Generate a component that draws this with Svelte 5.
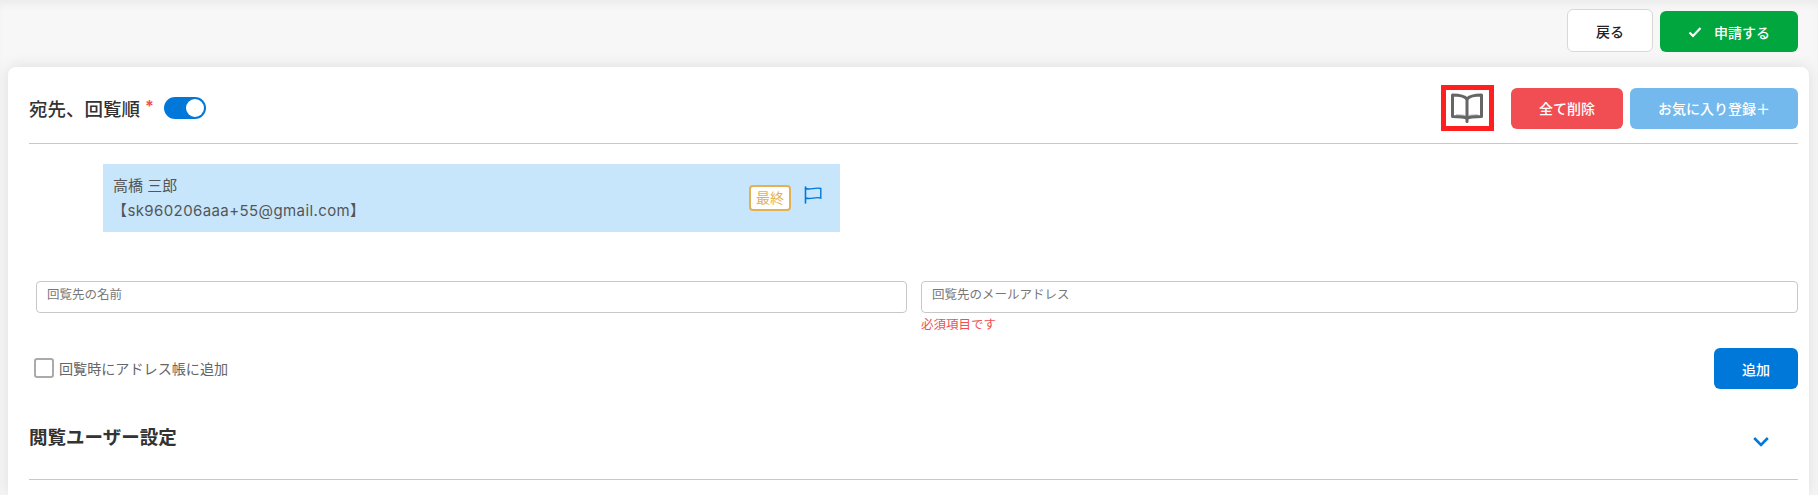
<script>
  let routeOn = $state(true);
  let addToBook = $state(false);
  let name = $state('');
  let email = $state('');
</script>

<div class="page">
  <header class="topbar">
    <button class="btn back">戻る</button>
    <button class="btn apply">
      <svg class="check" viewBox="0 0 14 12" width="14" height="12" aria-hidden="true">
        <path d="M1.5 6.5 L5 10 L12.5 2" fill="none" stroke="#fff" stroke-width="2.2" />
      </svg>
      申請する
    </button>
  </header>

  <main class="card">
    <div class="section-head">
      <div class="title-wrap">
        <h2>宛先、回覧順</h2>
        <span class="req">*</span>
        <button class="toggle" class:off={!routeOn} aria-label="toggle" onclick={() => (routeOn = !routeOn)}>
          <span class="knob"></span>
        </button>
      </div>
      <div class="head-actions">
        <span class="book-box">
          <svg viewBox="0 0 34 32" width="34" height="32" aria-hidden="true">
            <path d="M5 23 C10 23 14 23 16 25 C18 23 22 23 27 23" fill="none" stroke="#ccc" stroke-width="2" />
            <path d="M16 7 C14 4.500 11 3 1.500 3 V24.500 C9 24.500 14 24.500 16 26.500 C18 24.500 23 24.500 30.500 24.500 V3 C21 3 18 4.500 16 7 Z" fill="none" stroke="#666" stroke-width="3" stroke-linejoin="round" />
            <path d="M16 7 V29.500" fill="none" stroke="#666" stroke-width="3" stroke-linecap="round" />
          </svg>
        </span>
        <button class="btn del">全て削除</button>
        <button class="btn fav">お気に入り登録＋</button>
      </div>
    </div>

    <div class="recipient">
      <div class="who">
        <div>高橋 三郎</div>
        <div class="mail">【sk960206aaa+55@gmail.com】</div>
      </div>
      <span class="badge">最終</span>
      <svg class="flag" viewBox="0 0 18 18" width="18" height="18" aria-hidden="true">
        <path d="M1.500 1 V17" stroke="#0078d9" stroke-width="1.600" fill="none" stroke-linecap="round" />
        <path d="M1.500 2.500 C6 4.500 11 1 16.800 2.500 V12 C11 10.500 6 14 1.500 12" stroke="#0078d9" stroke-width="1.400" fill="none" />
      </svg>
    </div>

    <div class="fields">
      <div class="field">
        <input type="text" placeholder="回覧先の名前" bind:value={name} />
      </div>
      <div class="field">
        <input type="text" placeholder="回覧先のメールアドレス" bind:value={email} />
        <p class="err">必須項目です</p>
      </div>
    </div>

    <div class="add-row">
      <label class="chk">
        <input type="checkbox" bind:checked={addToBook} />
        <span>回覧時にアドレス帳に追加</span>
      </label>
      <button class="btn add">追加</button>
    </div>

    <div class="sub-head">
      <h2>閲覧ユーザー設定</h2>
      <svg class="chev" viewBox="0 0 16 11" width="16" height="11" aria-hidden="true">
        <path d="M1.200 2 L8 8.800 L14.800 2" fill="none" stroke="#0078d9" stroke-width="2.600" />
      </svg>
    </div>
  </main>
</div>

<style>
  :global(body) {
    margin: 0;
    background: #f7f7f7;
    font-family: Inter, "Noto Sans CJK JP", sans-serif;
    color: #555;
  }

  .page {
    height: 495px;
    overflow: hidden;
    background: #f7f7f7;
    box-shadow: inset 0 8px 10px -4px rgba(0, 0, 0, 0.05);
  }

  .topbar {
    display: flex;
    justify-content: flex-end;
    align-items: flex-end;
    gap: 7px;
    height: 52px;
    padding-right: 20px;
  }

  .btn {
    border: none;
    border-radius: 6px;
    font-family: inherit;
    font-size: 14px;
    font-weight: 500;
    color: #fff;
    cursor: pointer;
    padding: 0;
  }

  .back {
    width: 86px;
    height: 43px;
    background: #fff;
    border: 1px solid #d8d8d8;
    color: #222;
  }

  .apply {
    width: 138px;
    height: 41px;
    background: #02a63f;
    display: flex;
    align-items: center;
    justify-content: center;
    gap: 12px;
  }

  .card {
    margin: 15px 9px 0 8px;
    height: 428px;
    padding: 0 11px 0 21px;
    box-sizing: border-box;
    background: #fff;
    border-radius: 8px 8px 0 0;
    box-shadow: 0 0 16px rgba(0, 0, 0, 0.11);
  }

  .section-head {
    display: flex;
    justify-content: space-between;
    align-items: center;
    height: 70px;
    padding-top: 6px;
    border-bottom: 1px solid #c8c8c8;
    box-sizing: content-box;
  }

  h2 {
    margin: 0;
    font-size: 18.500px;
    font-weight: 700;
    color: #333;
  }

  .section-head h2 {
    font-weight: 500;
  }

  .title-wrap {
    display: flex;
    align-items: center;
  }

  .req {
    color: #f04e53;
    font-size: 16px;
    font-weight: 700;
    line-height: 1;
    margin: 0 10px 0 5px;
    position: relative;
    top: -2px;
  }

  .toggle {
    width: 42px;
    height: 22px;
    padding: 2px;
    border: none;
    border-radius: 11px;
    background: #0078d9;
    display: flex;
    justify-content: flex-end;
    cursor: pointer;
  }

  .toggle.off {
    background: #bbb;
    justify-content: flex-start;
  }

  .knob {
    width: 18px;
    height: 18px;
    border-radius: 50%;
    background: #fff;
  }

  .head-actions {
    display: flex;
    align-items: center;
  }

  .book-box {
    width: 53px;
    height: 46px;
    box-sizing: border-box;
    border: 5px solid #ff1f1f;
    display: flex;
    align-items: center;
    justify-content: center;
    margin-right: 17px;
  }

  .del {
    width: 112px;
    height: 41px;
    background: #f04e53;
    margin-right: 7px;
  }

  .fav {
    width: 168px;
    height: 41px;
    background: #73b9ee;
  }

  .recipient {
    display: flex;
    align-items: center;
    width: 737px;
    height: 68px;
    box-sizing: border-box;
    margin: 20px 0 0 74px;
    padding: 0 18px 0 10px;
    background: #c7e6fc;
    font-size: 15px;
    line-height: 25.500px;
    color: #555;
  }

  .who {
    flex: 1;
  }

  .mail {
    margin-left: -1px;
    letter-spacing: 0.400px;
  }

  .badge {
    width: 42px;
    height: 26px;
    box-sizing: border-box;
    border: 2px solid #e4b152;
    border-radius: 4px;
    background: #fff;
    color: #e4b152;
    font-size: 14px;
    line-height: 22px;
    text-align: center;
    margin-right: 13px;
  }

  .flag {
    margin-top: -6px;
  }

  .fields {
    display: grid;
    grid-template-columns: 871px 877px;
    gap: 14px;
    margin: 49px 0 0 7px;
    height: 67px;
  }

  .field input {
    display: block;
    width: 100%;
    height: 32px;
    box-sizing: border-box;
    border: 1px solid #c8c8c8;
    border-radius: 4px;
    padding: 0 10px 5px;
    font-family: inherit;
    font-size: 12.500px;
    background: #fff;
    outline: none;
  }

  .field input::placeholder {
    color: #777;
    opacity: 1;
  }

  .err {
    margin: 4px 0 0;
    font-size: 12.500px;
    line-height: 16px;
    color: #f04e53;
  }

  .add-row {
    display: flex;
    justify-content: space-between;
    align-items: center;
    margin-left: 5px;
  }

  .chk {
    display: flex;
    align-items: center;
    gap: 5px;
    font-size: 14.100px;
    color: #666;
    margin-top: -2px;
  }

  .chk input {
    appearance: none;
    width: 20px;
    height: 20px;
    margin: 0;
    box-sizing: border-box;
    border: 2px solid #aaa;
    border-radius: 3px;
    background: #fff;
  }

  .add {
    width: 84px;
    height: 41px;
    background: #0078d9;
  }

  .sub-head {
    display: flex;
    justify-content: space-between;
    align-items: center;
    height: 91px;
    box-sizing: border-box;
    padding-top: 4px;
    border-bottom: 1px solid #c8c8c8;
    padding-right: 29px;
  }

  .chev {
    margin-top: 10px;
  }
</style>
